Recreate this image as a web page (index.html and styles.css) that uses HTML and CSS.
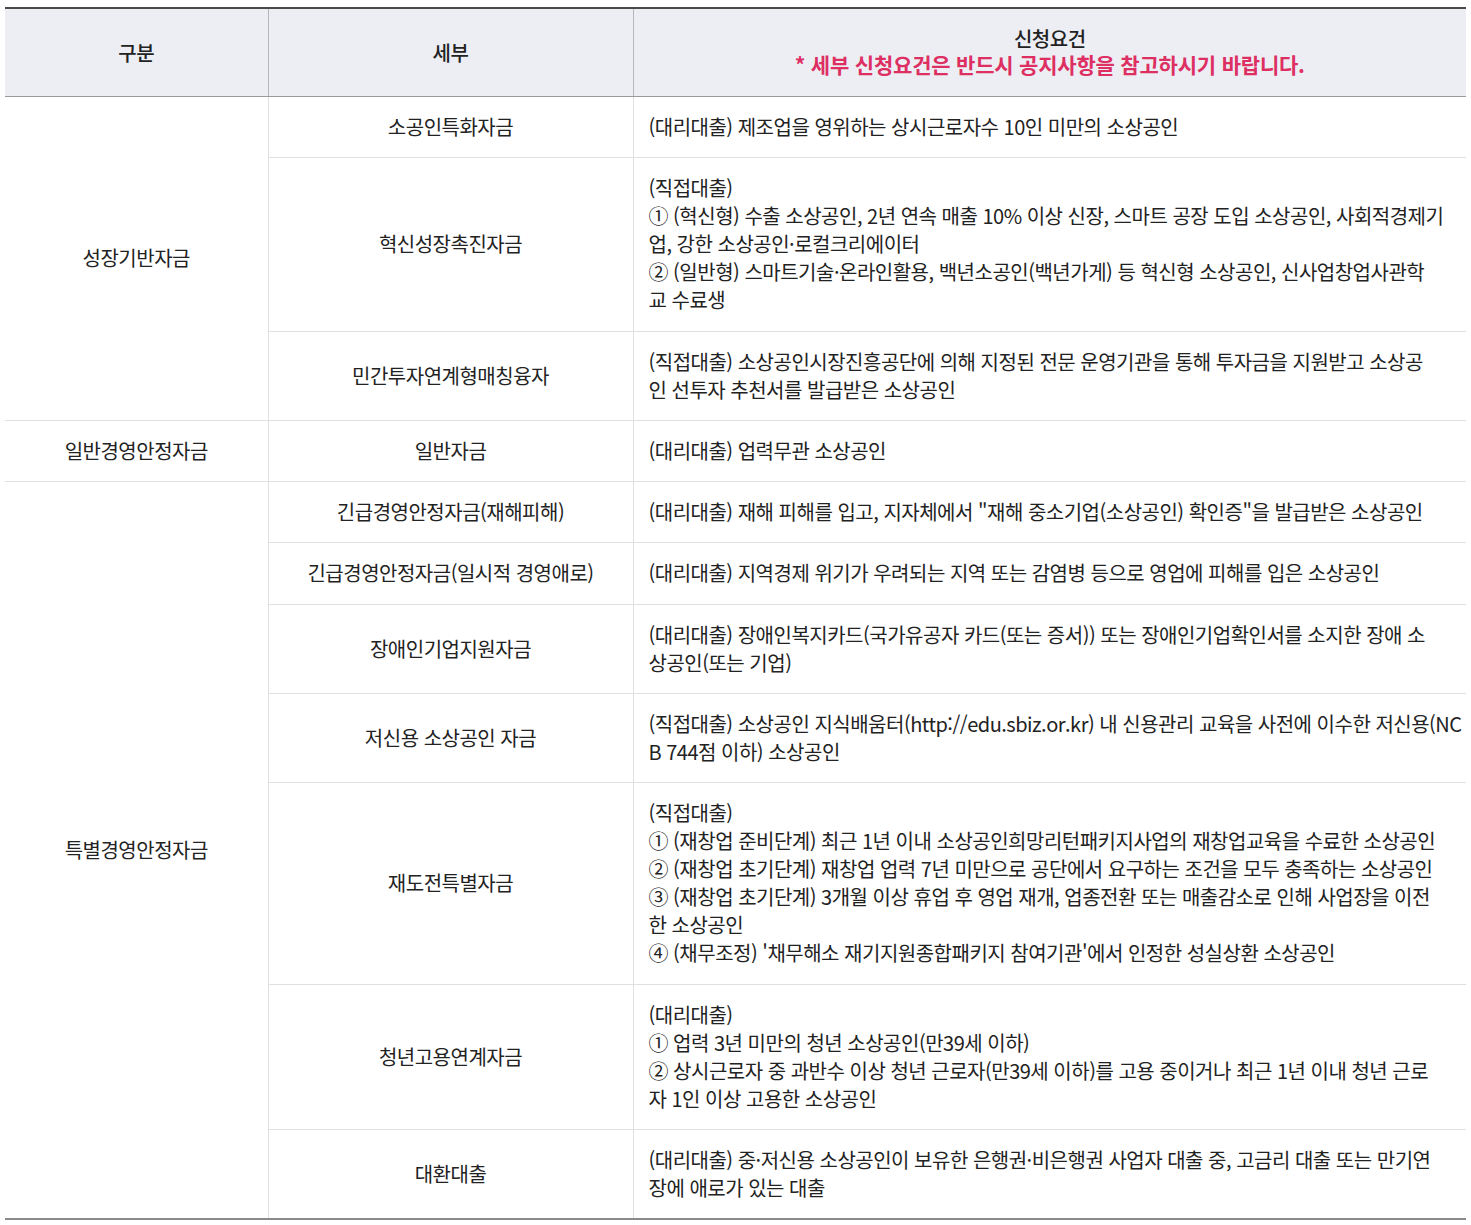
FILE: index.html
```html
<!DOCTYPE html>
<html lang="ko">
<head>
<meta charset="utf-8">
<title>자금 신청요건</title>
<link rel="stylesheet" href="styles.css">
</head>
<body>
<table class="loan">
  <colgroup>
    <col class="c1">
    <col class="c2">
    <col class="c3">
  </colgroup>
  <thead>
    <tr>
      <th>구분</th>
      <th>세부</th>
      <th><span class="title">신청요건</span><span class="note">* 세부 신청요건은 반드시 공지사항을 참고하시기 바랍니다.</span></th>
    </tr>
  </thead>
  <tbody>
    <tr>
      <td class="cat" rowspan="3">성장기반자금</td>
      <td class="sub">소공인특화자금</td>
      <td class="req">(대리대출) 제조업을 영위하는 상시근로자수 10인 미만의 소상공인</td>
    </tr>
    <tr>
      <td class="sub">혁신성장촉진자금</td>
      <td class="req">(직접대출)<br>① (혁신형) 수출 소상공인, 2년 연속 매출 10% 이상 신장, 스마트 공장 도입 소상공인, 사회적경제기<br>업, 강한 소상공인·로컬크리에이터<br>② (일반형) 스마트기술·온라인활용, 백년소공인(백년가게) 등 혁신형 소상공인, 신사업창업사관학<br>교 수료생</td>
    </tr>
    <tr>
      <td class="sub">민간투자연계형매칭융자</td>
      <td class="req">(직접대출) 소상공인시장진흥공단에 의해 지정된 전문 운영기관을 통해 투자금을 지원받고 소상공<br>인 선투자 추천서를 발급받은 소상공인</td>
    </tr>
    <tr>
      <td class="cat">일반경영안정자금</td>
      <td class="sub">일반자금</td>
      <td class="req">(대리대출) 업력무관 소상공인</td>
    </tr>
    <tr>
      <td class="cat" rowspan="7">특별경영안정자금</td>
      <td class="sub">긴급경영안정자금(재해피해)</td>
      <td class="req">(대리대출) 재해 피해를 입고, 지자체에서 "재해 중소기업(소상공인) 확인증"을 발급받은 소상공인</td>
    </tr>
    <tr>
      <td class="sub">긴급경영안정자금(일시적 경영애로)</td>
      <td class="req">(대리대출) 지역경제 위기가 우려되는 지역 또는 감염병 등으로 영업에 피해를 입은 소상공인</td>
    </tr>
    <tr>
      <td class="sub">장애인기업지원자금</td>
      <td class="req">(대리대출) 장애인복지카드(국가유공자 카드(또는 증서)) 또는 장애인기업확인서를 소지한 장애 소<br>상공인(또는 기업)</td>
    </tr>
    <tr>
      <td class="sub">저신용 소상공인 자금</td>
      <td class="req">(직접대출) 소상공인 지식배움터(http://edu.sbiz.or.kr) 내 신용관리 교육을 사전에 이수한 저신용(NC<br>B 744점 이하) 소상공인</td>
    </tr>
    <tr>
      <td class="sub">재도전특별자금</td>
      <td class="req">(직접대출)<br>① (재창업 준비단계) 최근 1년 이내 소상공인희망리턴패키지사업의 재창업교육을 수료한 소상공인<br>② (재창업 초기단계) 재창업 업력 7년 미만으로 공단에서 요구하는 조건을 모두 충족하는 소상공인<br>③ (재창업 초기단계) 3개월 이상 휴업 후 영업 재개, 업종전환 또는 매출감소로 인해 사업장을 이전<br>한 소상공인<br>④ (채무조정) '채무해소 재기지원종합패키지 참여기관'에서 인정한 성실상환 소상공인</td>
    </tr>
    <tr>
      <td class="sub">청년고용연계자금</td>
      <td class="req">(대리대출)<br>① 업력 3년 미만의 청년 소상공인(만39세 이하)<br>② 상시근로자 중 과반수 이상 청년 근로자(만39세 이하)를 고용 중이거나 최근 1년 이내 청년 근로<br>자 1인 이상 고용한 소상공인</td>
    </tr>
    <tr>
      <td class="sub">대환대출</td>
      <td class="req">(대리대출) 중·저신용 소상공인이 보유한 은행권·비은행권 사업자 대출 중, 고금리 대출 또는 만기연<br>장에 애로가 있는 대출</td>
    </tr>
  </tbody>
</table>
</body>
</html>
```

FILE: styles.css
```css
html, body {
  margin: 0;
  padding: 0;
  background: #ffffff;
}

body {
  padding: 7px 5px 0 5px;
  font-family: "Noto Sans CJK KR", "Noto Sans", sans-serif;
  color: #222222;
}

.loan {
  width: 1461px;
  border-collapse: collapse;
  table-layout: fixed;
  border-top: 2px solid #4a4a4a;
  border-bottom: 2px solid #8a8a8a;
  font-size: 20px;
  letter-spacing: -0.5px;
  line-height: 28px;
}

.c1 { width: 263px; }
.c2 { width: 365px; }
.c3 { width: auto; }

.loan th {
  background: #eceef4;
  font-weight: 500;
  color: #222222;
  height: 87px;
  padding: 0;
  text-align: center;
  vertical-align: middle;
  border-left: 1px solid #b5b7bc;
  border-bottom: 1px solid #9a9a9a;
}

.loan th:first-child {
  border-left: none;
}

.title {
  display: block;
  line-height: 24px;
}

.note {
  display: block;
  color: #dd2f62;
  font-weight: 700;
  font-size: 21px;
  line-height: 27px;
  letter-spacing: -0.2px;
}

.loan td {
  padding: 16px 15px 16.3px;
  border-left: 1px solid #e0e0e0;
  border-bottom: 1px solid #e0e0e0;
  vertical-align: middle;
}

.loan td.cat {
  border-left: none;
  text-align: center;
}

.loan td.sub {
  text-align: center;
}

.loan td.req {
  text-align: left;
  padding-right: 4px;
}

.loan tbody tr:last-child td {
  border-bottom: none;
}
```
